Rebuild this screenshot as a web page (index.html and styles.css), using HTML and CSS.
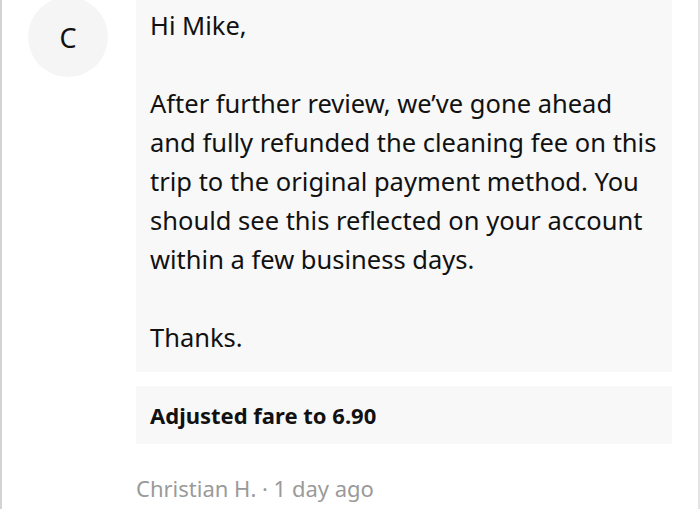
FILE: index.html
```html
<!DOCTYPE html>
<html lang="en">
<head>
    <meta charset="UTF-8">
    <meta name="viewport" content="width=device-width, initial-scale=1.0">
    <title>Trip help</title>
    <link rel="stylesheet" href="styles.css">
</head>
<body>
    <div class="thread">
        <div class="message">
            <div class="avatar">C</div>
            <div class="content">
                <div class="bubble">
                    <p>Hi Mike,</p>
                    <p>After further review, we’ve gone ahead<br>
                    and fully refunded the cleaning fee on this<br>
                    trip to the original payment method. You<br>
                    should see this reflected on your account<br>
                    within a few business days.</p>
                    <p>Thanks.</p>
                </div>
                <div class="action">Adjusted fare to 6.90</div>
                <div class="meta">Christian H. · 1 day ago</div>
            </div>
        </div>
    </div>
</body>
</html>
```

FILE: styles.css
```css
body {
    margin: 0;
    font-family: "Noto Sans", "Open Sans", sans-serif;
    color: #111;
    background: #fff;
}

.thread {
    height: 509px;
    border-left: 2px solid #d4d4d4;
    border-right: 2px solid #e4e4e4;
    overflow: hidden;
}

.message {
    display: flex;
    align-items: flex-start;
}

.avatar {
    flex: none;
    width: 80px;
    height: 80px;
    margin: -3px 28px 0 26px;
    border-radius: 50%;
    background-color: #f5f5f5;
    display: flex;
    align-items: center;
    justify-content: center;
    font-size: 27px;
}

.content {
    width: 536px;
}

.bubble {
    background-color: #f8f8f8;
    padding: 6px 15px 15px 14px;
    font-size: 25.5px;
    line-height: 39px;
    white-space: nowrap;
}

.bubble p {
    margin: 0 0 39px 0;
}

.bubble p:last-child {
    margin-bottom: 0;
}

.action {
    margin-top: 14px;
    background-color: #f8f8f8;
    padding: 0 14px;
    height: 58px;
    line-height: 58px;
    font-size: 22px;
    font-weight: bold;
}

.meta {
    margin-top: 29px;
    font-size: 22px;
    color: #9a9a9a;
}
```
